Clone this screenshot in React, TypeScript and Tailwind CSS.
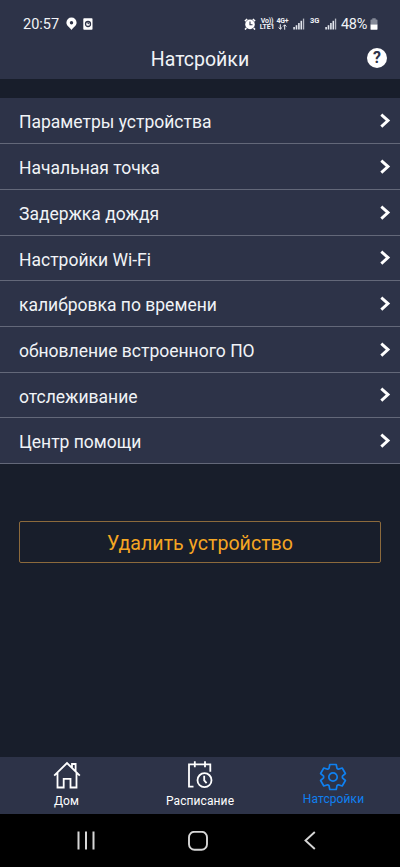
const menuItems = [
	{ id: 1, title: "Параметры устройства", size: "h-[46px]" },
	{ id: 2, title: "Начальная точка", size: "h-[46px]" },
	{ id: 3, title: "Задержка дождя", size: "h-[46px]" },
	{ id: 4, title: "Настройки Wi-Fi", size: "h-[45px]" },
	{ id: 5, title: "калибровка по времени", size: "h-[46px]" },
	{ id: 6, title: "обновление встроенного ПО", size: "h-[46px]" },
	{ id: 7, title: "отслеживание", size: "h-[45px]" },
	{ id: 8, title: "Центр помощи", size: "h-[46px]" },
];

const Signal = () => (
	<svg width="12" height="12" viewBox="0 0 12 12" fill="#e4e7ee">
		<rect x="0.3" y="9" width="1.6" height="2.5" />
		<rect x="2.7" y="7.2" width="1.6" height="4.3" />
		<rect x="5.1" y="5" width="1.6" height="6.5" />
		<rect x="7.5" y="2.8" width="1.6" height="8.7" />
		<rect x="9.9" y="0.6" width="1.3" height="10.9" opacity="0.75" />
	</svg>
);

const StatusBar = () => (
	<div className="flex h-[38px] pt-[10px] pl-[23px] pr-[22px] justify-between text-[#f1f3f7]">
		<div className="flex h-7 items-center">
			<span className="pt-[1px] text-[14.5px] w-[37px] whitespace-nowrap">20:57</span>
			<svg className="ml-[6px]" width="11" height="14" viewBox="0 0 11 14">
				<path
					fill="#fff"
					fillRule="evenodd"
					d="M5.5 .6a5.1 5.1 0 0 1 5.1 5.1C10.6 8.8 7.2 10.3 5.5 13 3.8 10.3.4 8.8.4 5.7A5.1 5.1 0 0 1 5.5.6zm0 3.4a1.7 1.7 0 1 0 0 3.4 1.7 1.7 0 0 0 0-3.4z"
				/>
			</svg>
			<svg className="ml-[6px]" width="10" height="12" viewBox="0 0 10 12">
				<rect x="0.3" y="0.2" width="9.2" height="11.6" rx="0.8" fill="#fff" />
				<circle cx="5" cy="6" r="2.5" fill="none" stroke="#2d3348" strokeWidth="1.3" />
				<path d="M5 6V4M5 6l1.5-1" stroke="#2d3348" strokeWidth="0.9" />
			</svg>
		</div>
		<div className="flex h-7 items-center">
			<svg width="12" height="12" viewBox="0 0 12 12">
				<circle cx="6" cy="6.4" r="4.8" fill="#fff" />
				<path
					d="M.9 3.1 3.2 1M11.1 3.1 8.8 1M2.4 10.1 1 11.6M9.6 10.1l1.4 1.5"
					stroke="#fff"
					strokeWidth="1.5"
				/>
				<path d="M6 3.5v3.2h2.5" fill="none" stroke="#2d3348" strokeWidth="1.1" />
			</svg>
			<div className="ml-[3px] w-[16px] text-center text-[7px] leading-[6.5px] font-bold">
				<p className="tracking-[-0.2px]">Vo))</p>
				<p className="tracking-[-0.2px]">LTE1</p>
			</div>
			<div className="ml-[1px] w-[13px] flex flex-col items-center text-[7px] leading-[6.5px] font-bold">
				<p className="tracking-[-0.2px]">4G+</p>
				<svg width="9" height="6" viewBox="0 0 9 6" fill="none" stroke="#f1f3f7">
					<path d="M2.3.3v4.8M.6 3.5l1.7 1.7L4 3.5M6.7 5.7V.9M5 2.5 6.7.8l1.7 1.7" />
				</svg>
			</div>
			<div className="ml-[4px]">
				<Signal />
			</div>
			<span className="ml-[5px] mb-[6px] w-[10px] text-[7.5px] leading-[8px] font-bold">3G</span>
			<div className="ml-[5px]">
				<Signal />
			</div>
			<span className="ml-[4px] w-[29px] pt-[1px] whitespace-nowrap text-[14.5px] tracking-[-0.3px]">48%</span>
			<svg width="8" height="12" viewBox="0 0 8 12">
				<path fill="#858a98" d="M2.3.2h3.4v1.2h1.1q.7 0 .7.8v4.6h-7V2.2q0-.8.7-.8h1.1z" />
				<path fill="#fff" d="M.5 6.5h7v4.4q0 .9-.9.9H1.4q-.9 0-.9-.9z" />
			</svg>
		</div>
	</div>
);

const Header = () => (
	<div className="grid h-[41px] grid-cols-[1fr_auto_1fr] items-center">
		<span />
		<h1 className="pt-[2px] text-[19.5px] text-[#f1f3f7]">Натсройки</h1>
		<div className="ml-auto mr-[13px] mb-[1px] flex size-5 items-center justify-center rounded-full bg-white text-[16px] font-bold text-[#2d3348]">
			?
		</div>
	</div>
);

const TabBar = () => (
	<div className="flex h-[57px] bg-[#2d3348] text-[12px] leading-[14px] text-white">
		<div className="flex w-[133px] flex-col items-center pt-[4px]">
			<svg width="28" height="28" viewBox="0 0 28 28" fill="none" stroke="#fff" strokeWidth="1.8">
				<path d="M1.2 14.7 14 2l12.8 12.7M4.5 12v14.5h6.2v-8.7h6.8v8.7h6V12M19 6.7V3h3.6v7.2" />
			</svg>
			<span className="mt-[5px] tracking-[0.1px]">Дом</span>
		</div>
		<div className="flex w-[134px] flex-col items-center pt-[3px]">
			<svg width="28" height="29" viewBox="0 0 28 29" fill="none" stroke="#fff" strokeWidth="1.8">
				<path d="M7.5 26.7H3V4.3h21.3v7.5M8.8 1.2v6M19 1.2v6" />
				<circle cx="18.5" cy="20.2" r="7" />
				<path d="M18.2 15.8v4.6l2.4 2.8" />
			</svg>
			<span className="mt-[5px] tracking-[0.1px]">Расписание</span>
		</div>
		<div className="flex w-[133px] flex-col items-center pt-[6px] text-[#0f80f0]">
			<svg
				className="mr-[1px]"
				width="28"
				height="28"
				viewBox="-14 -14 28 28"
				fill="none"
				stroke="currentColor"
				strokeWidth="1.7"
				strokeLinejoin="round">
				<path d="M-4-8.6-3.2-12.5H3.2L4-8.6 5.4-7.8 9.2-9 12.4-3.5 9.4-.8V.8L12.4 3.5 9.2 9 5.4 7.8 4 8.6 3.2 12.5H-3.2L-4 8.6-5.4 7.8-9.2 9-12.4 3.5-9.4.8V-.8L-12.4-3.5-9.2-9-5.4-7.8z" />
				<circle r="4.2" />
			</svg>
			<span className="mt-[1px] tracking-[0.1px]">Натсройки</span>
		</div>
	</div>
);

const SystemNav = () => (
	<div className="flex h-[53px] items-center justify-between bg-black pl-[76px] pr-[80px]">
		<svg width="20" height="20" viewBox="0 0 20 20" stroke="#d6d6d6" strokeWidth="2">
			<path d="M2.5 .5v18M10 .5v18M17.5 .5v18" />
		</svg>
		<svg width="20" height="20" viewBox="0 0 20 20" fill="none" stroke="#d6d6d6" strokeWidth="1.9">
			<rect x="1" y="0.8" width="18" height="18" rx="5.5" />
		</svg>
		<svg width="20" height="20" viewBox="0 0 20 20" fill="none" stroke="#d6d6d6" strokeWidth="1.9">
			<path d="M14.8 1 5.5 9.5l9.3 8.5" />
		</svg>
	</div>
);

export default function App() {
	return (
		<div className="flex h-[867px] w-[400px] flex-col overflow-hidden bg-[#181e2b] font-['Roboto','Liberation_Sans',sans-serif]">
			<div className="h-[79px] bg-[#2d3348]">
				<StatusBar />
				<Header />
			</div>
			<ul className="mt-[19px]">
				{menuItems.map((item) => (
					<li
						key={item.id}
						className={`${item.size} flex items-center justify-between border-b border-[#636879] bg-[#2d3348] pl-[19px] pr-[9px]`}>
						<span className="pt-[3px] text-[17.5px] leading-[26px] text-[#f1f3f7]">{item.title}</span>
						<svg width="11" height="16" viewBox="0 0 11 16" fill="none" stroke="#fff" strokeWidth="2.9">
							<path d="M1.3 1.6 8 7.6l-6.7 6" />
						</svg>
					</li>
				))}
			</ul>
			<div className="flex-1 px-[19px] pt-[57px]">
				<button className="h-[42px] w-full rounded-[2px] border border-[#8c6a3c] pt-[4px] text-[19.6px] text-[#f5a623]">
					Удалить устройство
				</button>
			</div>
			<TabBar />
			<SystemNav />
		</div>
	);
}
